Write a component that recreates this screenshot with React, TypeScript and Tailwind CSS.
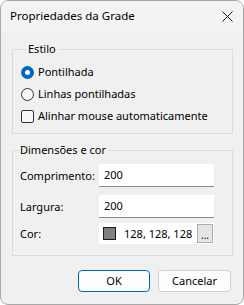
import { useState } from 'react';

const font = { fontFamily: '"Noto Sans", "Open Sans", sans-serif' };

function Radio({ checked, label, onClick }: { checked: boolean; label: string; onClick: () => void }) {
  return (
    <button type="button" onClick={onClick} className="flex h-[22px] items-center gap-[4px] text-left">
      {checked ? (
        <span className="flex h-[13px] w-[13px] items-center justify-center rounded-full bg-[#0067c0]">
          <span className="h-[5px] w-[5px] rounded-full bg-white" />
        </span>
      ) : (
        <span className="h-[13px] w-[13px] rounded-full border border-[#333333] bg-[#f7f7f7]" />
      )}
      <span>{label}</span>
    </button>
  );
}

function Field({ label, value }: { label: string; value: string }) {
  return (
    <div className="flex items-center">
      <span className="w-[86px] whitespace-nowrap pl-[7px]">{label}</span>
      <div className="flex h-[23px] w-[115px] items-center border-b border-[#8a8a8a] bg-white pl-[5px]">
        {value}
      </div>
    </div>
  );
}

export default function App() {
  const [style, setStyle] = useState<'dot' | 'line'>('dot');
  const [snap, setSnap] = useState(false);

  return (
    <div className="h-[305px] w-[244px] bg-white text-[11px] leading-[16px] text-black" style={font}>
      <div className="flex h-full w-full flex-col overflow-hidden rounded-[8px] border border-[#a8a8a8] bg-[#f0f0f0]">
        {/* title bar */}
        <div className="flex h-[30px] shrink-0 items-center justify-between bg-[#f3f3f3] pl-[9px] pr-[9px]">
          <span className="text-[11.5px]">Propriedades da Grade</span>
          <svg width="11" height="11" viewBox="0 0 11 11" className="mr-[1px]">
            <path d="M0.5 0.5 L10.5 10.5 M10.5 0.5 L0.5 10.5" stroke="#1a1a1a" strokeWidth="1" />
          </svg>
        </div>

        <div className="flex flex-col pl-[11px] pt-[10px]">
          <fieldset className="w-[221px] border border-[#dcdcdc] pb-[6px] pl-[8px] pt-[4px]">
            <legend className="ml-[5px] px-[2px]">Estilo</legend>
            <Radio checked={style === 'dot'} label="Pontilhada" onClick={() => setStyle('dot')} />
            <Radio checked={style === 'line'} label="Linhas pontilhadas" onClick={() => setStyle('line')} />
            <button type="button" onClick={() => setSnap(!snap)} className="flex h-[22px] items-center gap-[4px] text-left">
              <span className="flex h-[13px] w-[13px] items-center justify-center rounded-[2px] border border-[#333333] bg-[#f7f7f7]">
                {snap && (
                  <svg width="9" height="9" viewBox="0 0 9 9">
                    <path d="M1 4.5 L3.5 7 L8 1.5" fill="none" stroke="#000" strokeWidth="1.2" />
                  </svg>
                )}
              </span>
              <span>Alinhar mouse automaticamente</span>
            </button>
          </fieldset>

          <fieldset className="mt-[8px] flex w-[221px] flex-col border border-[#dcdcdc] pb-[11px] pt-[6px]">
            <legend className="ml-[5px] px-[2px]">Dimensões e cor</legend>
            <div className="flex flex-col gap-[8px]">
              <Field label="Comprimento:" value="200" />
              <Field label="Largura:" value="200" />
            </div>
            <div className="mt-[5px] flex items-center">
              <span className="w-[86px] pl-[7px]">Cor:</span>
              <div className="flex h-[21px] w-[115px] items-center bg-white pl-[4px]">
                <span className="h-[13px] w-[13px] shrink-0 border border-[#1a1a1a] bg-[#808080]" />
                <span className="ml-[8px] flex-1 whitespace-nowrap">128, 128, 128</span>
                <span className="mr-[1px] flex h-[19px] w-[16px] shrink-0 items-end justify-center border border-[#adadad] bg-[#e5e5e5] pb-[2px] text-[10px] leading-[10px]">
                  ...
                </span>
              </div>
            </div>
          </fieldset>

          <div className="mt-[14px] flex gap-[8px] pl-[66px]">
            <button type="button" className="h-[22px] w-[72px] rounded-[4px] border border-[#0067c0] bg-[#fdfdfd]">
              OK
            </button>
            <button type="button" className="h-[22px] w-[73px] rounded-[4px] border border-[#d0d0d0] bg-[#fdfdfd]">
              Cancelar
            </button>
          </div>
        </div>
      </div>
    </div>
  );
}
